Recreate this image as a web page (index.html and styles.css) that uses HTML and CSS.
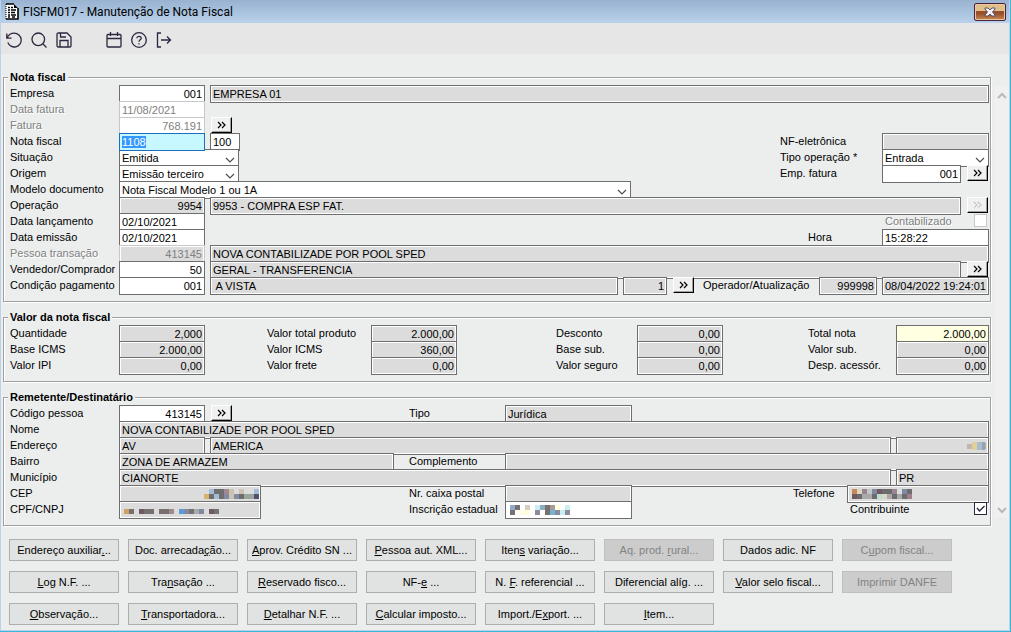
FILE: index.html
```html
<!DOCTYPE html>
<html lang="pt-BR">
<head>
<meta charset="UTF-8">
<meta name="viewport" content="width=device-width, initial-scale=1">
<title>FISFM017 - Manutenção de Nota Fiscal</title>
<link rel="stylesheet" href="styles.css">
</head>
<body>
<div class="window">
  <header class="titlebar">
    <svg class="app-icon" width="14" height="17" viewBox="0 0 14 17" aria-hidden="true">
      <path d="M1 1h8l4 4v11H1z" fill="#fff"/>
      <path d="M1 1h8M13 5v11H1" fill="none" stroke="#000" stroke-width="1.6"/>
      <path d="M1 1v15" fill="none" stroke="#000" stroke-dasharray="1 1"/>
      <path d="M9 1v4h4z" fill="#000"/>
      <path d="M3 4.500h2M6 4.500h2M3 7h2M6 7h5M3 9.500h2M6 9.500h4M3 12h2M6 12h5M3 14h2M7 14h3" stroke="#000" stroke-width="1.4"/>
    </svg>
    <h1>FISFM017 - Manutenção de Nota Fiscal</h1>
    <button class="close" type="button" aria-label="Fechar">
      <svg width="12" height="10" viewBox="0 0 12 10"><path d="M1 1h3l2 2 2-2h3v1L8.500 5 11 8v1H8L6 7 4 9H1V8l2.500-3L1 2z" fill="#f4f4f8" stroke="#55506a" stroke-width="1"/></svg>
    </button>
  </header>

  <nav class="toolbar" aria-label="Ferramentas">
    <button type="button" aria-label="Desfazer"><svg viewBox="0 0 16 16"><path d="M.8 1.500v4.700h4.700M1 6C2.500 2.800 5 1.200 8.300 1.200a6.900 6.900 0 1 1-6.500 9.200"/></svg></button>
    <button type="button" aria-label="Pesquisar"><svg viewBox="0 0 16 16"><circle cx="7.300" cy="7.300" r="6.300"/><path d="M12 12l3.500 3.500"/></svg></button>
    <button type="button" aria-label="Salvar"><svg viewBox="0 0 16 16"><path d="M1 2.200C1 1.500 1.500 1 2.200 1H11l4 4v8.800c0 .7-.5 1.200-1.200 1.200H2.200C1.500 15 1 14.500 1 13.800zM4 15V8.500h8V15M4.500 1v4H10"/></svg></button>
    <button class="apart" type="button" aria-label="Calendário"><svg viewBox="0 0 16 16"><path d="M1 3.500C1 2.900 1.500 2.500 2 2.500h12c.6 0 1 .4 1 1V14c0 .6-.4 1-1 1H2c-.5 0-1-.4-1-1zM1 6.500h14M4.500 0v4M11.500 0v4"/></svg></button>
    <button type="button" aria-label="Ajuda"><svg viewBox="0 0 16 16"><circle cx="8" cy="8" r="7.300"/><path d="M5.800 6.200C6 3.600 10.300 3.700 10.200 6.300 10.100 7.800 8 8 8 9.700M8 11.200v1.300"/></svg></button>
    <button type="button" aria-label="Sair"><svg viewBox="0 0 16 16"><path d="M5 1H1.500v14H5M5 8h9.500M11 4.500L14.500 8 11 11.500"/></svg></button>
  </nav>

  <main class="content">
    <form class="form">
      <fieldset>
        <legend>Nota fiscal</legend>

        <div class="row">
          <label class="main-label" for="empresa">Empresa</label>
          <input class="code num" id="empresa" value="001">
          <input class="grow" value="EMPRESA 01" aria-label="Nome da empresa" readonly>
        </div>
        <div class="row">
          <label class="main-label off" for="data-fatura">Data fatura</label>
          <input class="code" id="data-fatura" value="11/08/2021" disabled>
        </div>
        <div class="row">
          <label class="main-label off" for="fatura">Fatura</label>
          <input class="code num" id="fatura" value="768.191" disabled>
          <button class="more" type="button" aria-label="Buscar fatura"><svg viewBox="0 0 10 8"><path d="M1 1l3 3-3 3M5 1l3 3-3 3"/></svg></button>
        </div>
        <div class="row">
          <label class="main-label" for="nota">Nota fiscal</label>
          <input class="code current" id="nota" value="1108">
          <input class="serie" value="100" aria-label="Série">
          <div class="right">
            <label class="side-label" for="nfe">NF-eletrônica</label>
            <input class="date" id="nfe" readonly>
          </div>
        </div>
        <div class="row">
          <label class="main-label" for="situacao">Situação</label>
          <span class="combo combo-sm">
            <select id="situacao"><option>Emitida</option></select>
            <svg viewBox="0 0 10 6"><path d="M1 1l4 4 4-4"/></svg>
          </span>
          <div class="right">
            <label class="side-label" for="tipo-operacao">Tipo operação *</label>
            <span class="combo date">
              <select id="tipo-operacao"><option>Entrada</option></select>
              <svg viewBox="0 0 10 6"><path d="M1 1l4 4 4-4"/></svg>
            </span>
          </div>
        </div>
        <div class="row">
          <label class="main-label" for="origem">Origem</label>
          <span class="combo combo-sm">
            <select id="origem"><option>Emissão terceiro</option></select>
            <svg viewBox="0 0 10 6"><path d="M1 1l4 4 4-4"/></svg>
          </span>
          <div class="right">
            <label class="side-label" for="emp-fatura">Emp. fatura</label>
            <input class="emp num" id="emp-fatura" value="001">
            <button class="more" type="button" aria-label="Buscar empresa"><svg viewBox="0 0 10 8"><path d="M1 1l3 3-3 3M5 1l3 3-3 3"/></svg></button>
          </div>
        </div>
        <div class="row">
          <label class="main-label" for="modelo">Modelo documento</label>
          <span class="combo combo-lg">
            <select id="modelo"><option>Nota Fiscal Modelo 1 ou 1A</option></select>
            <svg viewBox="0 0 10 6"><path d="M1 1l4 4 4-4"/></svg>
          </span>
        </div>
        <div class="row">
          <label class="main-label" for="operacao">Operação</label>
          <input class="code num" id="operacao" value="9954" readonly>
          <input class="grow" value="9953 - COMPRA ESP FAT." aria-label="Descrição da operação" readonly>
          <button class="more" type="button" aria-label="Buscar operação" disabled><svg viewBox="0 0 10 8"><path d="M1 1l3 3-3 3M5 1l3 3-3 3"/></svg></button>
        </div>
        <div class="row">
          <label class="main-label" for="lancamento">Data lançamento</label>
          <input class="code" id="lancamento" value="02/10/2021">
          <div class="right check-row">
            <label class="off" for="contabilizado">Contabilizado</label>
            <input type="checkbox" id="contabilizado" disabled>
          </div>
        </div>
        <div class="row">
          <label class="main-label" for="emissao">Data emissão</label>
          <input class="code" id="emissao" value="02/10/2021">
          <div class="right">
            <label class="hour-label" for="hora">Hora</label>
            <input class="date" id="hora" value="15:28:22">
          </div>
        </div>
        <div class="row">
          <label class="main-label off" for="pessoa">Pessoa transação</label>
          <input class="code num shaded" id="pessoa" value="413145" disabled>
          <input class="grow" value="NOVA CONTABILIZADE POR POOL SPED" aria-label="Nome da pessoa" readonly>
        </div>
        <div class="row">
          <label class="main-label" for="vendedor">Vendedor/Comprador</label>
          <input class="code num" id="vendedor" value="50">
          <input class="grow" value="GERAL - TRANSFERENCIA" aria-label="Nome do vendedor" readonly>
          <button class="more" type="button" aria-label="Buscar vendedor"><svg viewBox="0 0 10 8"><path d="M1 1l3 3-3 3M5 1l3 3-3 3"/></svg></button>
        </div>
        <div class="row">
          <label class="main-label" for="condicao">Condição pagamento</label>
          <input class="code num" id="condicao" value="001">
          <input class="grow" value=" A VISTA" aria-label="Descrição da condição" readonly>
          <input class="parcel num" value="1" aria-label="Parcelas" readonly>
          <button class="more" type="button" aria-label="Ver parcelas"><svg viewBox="0 0 10 8"><path d="M1 1l3 3-3 3M5 1l3 3-3 3"/></svg></button>
          <label class="oper-label" for="operador">Operador/Atualização</label>
          <input class="oper num" id="operador" value="999998" readonly>
          <input class="date" value="08/04/2022 19:24:01" aria-label="Atualização" readonly>
        </div>
      </fieldset>

      <fieldset>
        <legend>Valor da nota fiscal</legend>
        <div class="values">
          <div class="pair"><label class="main-label" for="qtd">Quantidade</label><input class="code num" id="qtd" value="2,000" readonly></div>
          <div class="pair"><label class="value-label" for="total-produto">Valor total produto</label><input class="code num" id="total-produto" value="2.000,00" readonly></div>
          <div class="pair"><label class="tax-label" for="desconto">Desconto</label><input class="code num" id="desconto" value="0,00" readonly></div>
          <div class="pair"><label class="total-label" for="total-nota">Total nota</label><input class="total num highlight" id="total-nota" value="2.000,00"></div>

          <div class="pair"><label class="main-label" for="base-icms">Base ICMS</label><input class="code num" id="base-icms" value="2.000,00" readonly></div>
          <div class="pair"><label class="value-label" for="valor-icms">Valor ICMS</label><input class="code num" id="valor-icms" value="360,00" readonly></div>
          <div class="pair"><label class="tax-label" for="base-sub">Base sub.</label><input class="code num" id="base-sub" value="0,00" readonly></div>
          <div class="pair"><label class="total-label" for="valor-sub">Valor sub.</label><input class="total num" id="valor-sub" value="0,00" readonly></div>

          <div class="pair"><label class="main-label" for="valor-ipi">Valor IPI</label><input class="code num" id="valor-ipi" value="0,00" readonly></div>
          <div class="pair"><label class="value-label" for="frete">Valor frete</label><input class="code num" id="frete" value="0,00" readonly></div>
          <div class="pair"><label class="tax-label" for="seguro">Valor seguro</label><input class="code num" id="seguro" value="0,00" readonly></div>
          <div class="pair"><label class="total-label" for="despesas">Desp. acessór.</label><input class="total num" id="despesas" value="0,00" readonly></div>
        </div>
      </fieldset>

      <fieldset>
        <legend>Remetente/Destinatário</legend>
        <div class="row">
          <div class="first">
            <label class="main-label" for="codigo">Código pessoa</label>
            <input class="code num" id="codigo" value="413145">
            <button class="more" type="button" aria-label="Buscar pessoa"><svg viewBox="0 0 10 8"><path d="M1 1l3 3-3 3M5 1l3 3-3 3"/></svg></button>
          </div>
          <label class="mid-label" for="tipo">Tipo</label>
          <input class="mid" id="tipo" value="Jurídica" readonly>
        </div>
        <div class="row">
          <label class="main-label" for="nome">Nome</label>
          <input class="grow" id="nome" value="NOVA CONTABILIZADE POR POOL SPED" readonly>
        </div>
        <div class="row">
          <label class="main-label" for="endereco">Endereço</label>
          <input class="code" id="endereco" value="AV" readonly>
          <input class="grow" value="AMERICA" aria-label="Logradouro" readonly>
          <span class="masked total">
            <input class="num" aria-label="Número" readonly>
            <svg class="mosaic end" width="20" height="10" viewBox="0 0 20 10">
              <path d="M0 3h5v5H0z" fill="#c0b8a8"/><path d="M5 1h5v8H5z" fill="#e2d09a"/><path d="M10 1h5v8h-5z" fill="#a9bdd0"/><path d="M15 1h3v8h-3z" fill="#8da6bc"/><path d="M18 2h1v6h-1z" fill="#c6a878"/>
            </svg>
          </span>
        </div>
        <div class="row">
          <div class="first">
            <label class="main-label" for="bairro">Bairro</label>
            <input class="bairro" id="bairro" value="ZONA DE ARMAZEM" readonly>
          </div>
          <label class="mid-label" for="complemento">Complemento</label>
          <input class="grow" id="complemento" readonly>
        </div>
        <div class="row">
          <label class="main-label" for="municipio">Município</label>
          <input class="grow" id="municipio" value="CIANORTE" readonly>
          <input class="total" value="PR" aria-label="UF" readonly>
        </div>
        <div class="row">
          <div class="first">
            <label class="main-label" for="cep">CEP</label>
            <span class="masked doc">
              <input id="cep" readonly>
              <svg class="mosaic end" width="55" height="10" viewBox="0 0 55 10">
                <path d="M5 0h5v5H5zM10 5h5v5h-5zM50 0h5v5h-5z" fill="#a3bcd8"/>
                <path d="M10 0h10v5H10zM5 5h5v5H5zM15 5h5v5h-5zM35 5h5v5h-5z" fill="#6e6e70"/>
                <path d="M0 5h5v5H0z" fill="#d9b36c"/><path d="M20 0h5v5h-5z" fill="#a08a90"/>
                <path d="M25 0h5v10h-5zM35 0h5v5h-5z" fill="#c9c3b0"/>
                <path d="M20 5h5v5h-5zM30 5h5v5h-5z" fill="#858aa4"/><path d="M40 5h10v5H40z" fill="#9aa5a0"/><path d="M50 5h5v5h-5z" fill="#55506a"/>
              </svg>
            </span>
          </div>
          <label class="mid-label" for="caixa">Nr. caixa postal</label>
          <input class="mid" id="caixa" readonly>
          <div class="right">
            <label class="phone-label" for="telefone">Telefone</label>
            <span class="masked doc">
              <input id="telefone" readonly>
              <svg class="mosaic" width="60" height="10" viewBox="0 0 60 10">
                <path d="M0 0h5v5H0z" fill="#c58a58"/><path d="M5 0h5v5H5zM30 5h5v5h-5z" fill="#dcd6bc"/>
                <path d="M10 0h5v5h-5zM40 0h5v5h-5z" fill="#988594"/><path d="M15 0h5v5h-5z" fill="#c0c6c2"/>
                <path d="M20 0h5v5h-5zM50 0h5v5h-5z" fill="#8088a2"/><path d="M25 0h5v5h-5zM0 5h5v5H0z" fill="#6e5a60"/>
                <path d="M30 0h10v5H30zM5 5h5v5H5zM20 5h5v5h-5zM40 5h5v5h-5zM50 5h5v5h-5zM55 0h5v5h-5z" fill="#6c6c6e"/>
                <path d="M10 5h10v5H10zM35 5h5v5h-5zM45 5h5v5h-5z" fill="#a9a9aa"/><path d="M25 5h5v5h-5z" fill="#b8dcd6"/><path d="M55 5h5v5h-5z" fill="#a08090"/>
              </svg>
            </span>
          </div>
        </div>
        <div class="row">
          <div class="first">
            <label class="main-label" for="cnpj">CPF/CNPJ</label>
            <span class="masked doc">
              <input id="cnpj" readonly>
              <svg class="mosaic" width="98" height="10" viewBox="0 0 98 10">
                <path d="M0 4h5v5H0z" fill="#d0a064"/><path d="M5 4h5v5H5zM20 4h10v5H20zM35 4h10v5H35zM65 4h5v5h-5zM90 4h5v5h-5z" fill="#76716f"/>
                <path d="M15 4h5v5h-5zM85 4h5v5h-5z" fill="#6e5a64"/><path d="M45 4h5v5h-5z" fill="#a08a90"/>
                <path d="M55 4h5v5h-5z" fill="#5a9cd8"/><path d="M60 4h5v5h-5zM75 4h5v5h-5z" fill="#8088a2"/><path d="M70 4h5v5h-5z" fill="#a9a9aa"/>
              </svg>
            </span>
          </div>
          <label class="mid-label" for="inscricao">Inscrição estadual</label>
          <span class="masked mid">
            <input id="inscricao">
            <svg class="mosaic" width="60" height="10" viewBox="0 0 60 10">
              <path d="M0 0h5v5H0zM30 0h5v5h-5z" fill="#8fabc6"/><path d="M5 0h5v5H5zM0 5h5v5H0zM35 0h5v5h-5zM35 5h5v5h-5zM50 5h5v5h-5z" fill="#77716f"/>
              <path d="M15 0h5v5h-5z" fill="#d4d0be"/><path d="M10 5h10v5H10zM45 0h5v5h-5z" fill="#ffffe0"/>
              <path d="M25 0h5v5h-5zM55 0h5v5h-5zM50 5h5v5h-5z" fill="#c8f0f0"/><path d="M25 5h5v5h-5zM45 5h5v5h-5zM55 5h5v5h-5z" fill="#8c8c9c"/>
              <path d="M40 0h5v5h-5z" fill="#a39c98"/><path d="M40 5h5v5h-5z" fill="#74b4d4"/>
            </svg>
          </span>
          <div class="right check-row contrib">
            <label for="contribuinte">Contribuinte</label>
            <span class="tick">
              <input type="checkbox" id="contribuinte" checked>
              <svg viewBox="0 0 13 13"><path d="M3 6l2.500 3L10.500 4"/></svg>
            </span>
          </div>
        </div>
      </fieldset>
    </form>

    <div class="scrollbar" aria-hidden="true">
      <svg viewBox="0 0 10 8"><path d="M1 6l4-4 4 4"/></svg>
      <svg viewBox="0 0 10 8"><path d="M1 2l4 4 4-4"/></svg>
    </div>
  </main>

  <footer class="actions">
    <button type="button">Endereço auxiliar<u>.</u>..</button>
    <button type="button">Doc. arrecada<u>ç</u>ão...</button>
    <button type="button"><u>A</u>prov. Crédito SN ...</button>
    <button type="button"><u>P</u>essoa aut. XML...</button>
    <button type="button">Iten<u>s</u> variação...</button>
    <button type="button" disabled>Aq. prod. <u>r</u>ural...</button>
    <button type="button">Dados adic. NF</button>
    <button type="button" disabled>C<u>u</u>pom fiscal...</button>
    <button type="button"><u>L</u>og N.F. ...</button>
    <button type="button">Tra<u>n</u>sação ...</button>
    <button type="button"><u>R</u>eservado fisco...</button>
    <button type="button">NF-<u>e</u> ...</button>
    <button type="button">N. <u>F</u>. referencial ...</button>
    <button type="button">Diferencial alí<u>g</u>. ...</button>
    <button type="button"><u>V</u>alor selo fiscal...</button>
    <button type="button" disabled>Imprimir DANFE</button>
    <button type="button"><u>O</u>bservação...</button>
    <button type="button"><u>T</u>ransportadora...</button>
    <button type="button"><u>D</u>etalhar N.F. ...</button>
    <button type="button"><u>C</u>alcular imposto...</button>
    <button type="button">Import./E<u>x</u>port. ...</button>
    <button type="button"><u>I</u>tem...</button>
  </footer>
</div>

<script>
  // start on the invoice number, ready to be overtyped
  const nota = document.getElementById('nota');
  nota.focus();
  nota.select();
</script>
</body>
</html>
```
FILE: styles.css
```css
:root {
  --bg: #eceeee;
  --field: #dcdcdc;
  --line: #6e6e6e;
  --group: #a0a0a0;
  --off: #808080;
  --ink: #2e2640;
}

* {
  box-sizing: border-box;
}

body {
  margin: 0;
  min-height: 100vh;
  display: flex;
  border: solid #3ab8dc;
  border-width: 0 1px 1px 0;
  font: 11px/16px "Liberation Sans", Arial, sans-serif;
  color: #000;
  background: var(--bg);
}

.window {
  flex: 1;
  min-width: 0;
  display: flex;
  flex-direction: column;
  border: solid #b9d1ea;
  border-width: 0 1px 1px;
}

/* Title bar */
.titlebar {
  display: flex;
  align-items: center;
  height: 23px;
  padding: 0 3px 0 4px;
  background: linear-gradient(#98b2d0, #b9d1ea);
}

.titlebar h1 {
  flex: 1;
  margin: 0 0 0 4px;
  font: 12px/20px Roboto, "Open Sans", sans-serif;
}

.close {
  display: flex;
  align-items: center;
  justify-content: center;
  width: 32px;
  height: 18px;
  padding: 0;
  border: 1px solid #4a2040;
  border-radius: 2px;
  background: linear-gradient(#e0c088 0 45%, #98502c 45% 60%, #c88850);
  box-shadow: inset 0 0 0 1px #e8c8a0;
}

/* Toolbar */
.toolbar {
  display: flex;
  align-items: center;
  gap: 9px;
  height: 31px;
  padding: 2px 5px 0;
  background: #e6e6e6;
}

.toolbar button {
  width: 16px;
  height: 16px;
  padding: 0;
  border: 0;
  background: none;
}

.toolbar .apart {
  margin-left: 25px;
}

.toolbar svg {
  display: block;
  width: 16px;
  height: 16px;
  overflow: visible;
  fill: none;
  stroke: var(--ink);
  stroke-width: 1.3;
}

/* Form */
.content {
  display: flex;
  gap: 4px;
  padding: 15px 0 0 2px;
}

.form {
  flex: 1;
  min-width: 0;
  display: flex;
  flex-direction: column;
  gap: 7px;
}

fieldset {
  min-width: 0;
  margin: 0;
  padding: 0 1px 8px 6px;
  border: 1px solid var(--group);
  box-shadow: 1px 1px 0 #fff, inset 1px 1px 0 #fff;
}

legend {
  margin-left: -2px;
  padding: 0 2px;
  font-weight: bold;
  line-height: 16px;
  background: var(--bg);
}

.row,
.pair,
.first,
.right {
  display: flex;
  align-items: flex-start;
  gap: 5px;
  height: 16px;
}

/* fields are taller than their row, so each row covers the edge of the one above */
.row {
  position: relative;
}

.right {
  margin-left: auto;
}

.first {
  flex: none;
  width: 399px;
  margin-right: -5px;
}

label {
  flex: none;
  white-space: nowrap;
}

.main-label { width: 109px; margin-right: -5px; }
.side-label { width: 102px; margin-right: -5px; }
.hour-label { width: 74px; margin-right: -5px; }
.value-label { width: 104px; margin-right: -5px; }
.tax-label { width: 81px; margin-right: -5px; }
.total-label { width: 88px; margin-right: -5px; }
.mid-label { width: 96px; margin-right: -5px; }
.phone-label { width: 54px; margin-right: -5px; }
.oper-label { width: 111px; margin-left: 3px; }

.off {
  color: var(--off);
  text-shadow: 1px 1px 0 #fff;
}

input,
select {
  flex: none;
  height: 18px;
  margin: 0;
  padding: 0 2px;
  border: 1px solid var(--line);
  border-radius: 0;
  outline: 0;
  font: inherit;
  color: #000;
  background: #fff;
}

input:read-only {
  background: var(--field);
  box-shadow: inset 0 0 0 1px #fff;
}

input:disabled {
  border-color: #c8c8c8;
  color: var(--off);
  background: #fff;
}

input.shaded {
  background: var(--field);
}

input.highlight {
  background: #ffffe1;
}

input.current {
  position: relative;
  z-index: 1;
  border-color: #1a6fc0;
  background: #c8f8ff;
}

input.current::selection {
  color: #fff;
  background: #3399ff;
}

.num { text-align: right; }
.code { width: 86px; }
.serie { width: 30px; }
.emp { width: 79px; }
.parcel { width: 44px; }
.oper { width: 58px; }
.date { width: 107px; }
.total { width: 93px; }
.mid { width: 127px; }
.doc { width: 142px; }
.bairro { width: 275px; }

.grow {
  flex: 1;
  min-width: 0;
}

.combo {
  position: relative;
  flex: none;
}

.combo-sm { width: 120px; }
.combo-lg { flex: 0 1 512px; }

.combo select {
  display: block;
  width: 100%;
  padding: 0 2px 2px;
  appearance: none;
}

.combo svg {
  position: absolute;
  right: 4px;
  top: 8px;
  width: 10px;
  height: 6px;
  fill: none;
  stroke: #505050;
  stroke-width: 1.2;
  pointer-events: none;
}

.more {
  flex: none;
  display: flex;
  align-items: center;
  justify-content: center;
  width: 21px;
  height: 16px;
  margin: 0 1px;
  padding: 0;
  border: 1px solid #fff;
  border-right-color: #000;
  border-bottom-color: #000;
  background: #f0f0f0;
  box-shadow: inset -1px -1px 0 #a0a0a0;
}

.more svg {
  width: 10px;
  height: 8px;
  fill: none;
  stroke: #000;
  stroke-width: 1.2;
}

.more:disabled svg {
  stroke: #a8a8a8;
  stroke-dasharray: 1 1;
}

/* Tick boxes */
.check-row {
  width: 104px;
  justify-content: space-between;
  padding-right: 2px;
}

.contrib {
  width: 139px;
}

input[type="checkbox"] {
  display: block;
  width: 13px;
  height: 13px;
  margin-top: 1px;
  padding: 0;
  appearance: none;
  background: #fff;
  box-shadow: none;
}

.tick {
  position: relative;
}

.tick input {
  border-color: var(--ink);
}

.tick svg {
  position: absolute;
  left: 0;
  top: 1px;
  width: 13px;
  height: 13px;
  fill: none;
  stroke: var(--ink);
  stroke-width: 1.4;
  pointer-events: none;
}

/* Redacted values */
.masked {
  position: relative;
  flex: none;
}

.masked input {
  display: block;
  width: 100%;
}

.mosaic {
  position: absolute;
  left: 5px;
  top: 4px;
  shape-rendering: crispEdges;
}

.mosaic.end {
  left: auto;
  right: 2px;
}

.values {
  display: grid;
  grid-template-columns: 257fr 289fr 252fr 181fr;
}

.scrollbar {
  display: flex;
  flex-direction: column;
  justify-content: space-between;
  align-items: center;
  width: 14px;
  margin: 17px 0 8px;
  padding: 6px 0 4px;
  background: #f0f0f0;
}

.scrollbar svg {
  width: 10px;
  height: 8px;
  fill: none;
  stroke: #b8b8b8;
  stroke-width: 2;
}

/* Action buttons */
.actions {
  display: grid;
  grid-template-columns: repeat(auto-fill, 110px);
  gap: 10px 9px;
  padding: 13px 50px 5px 8px;
}

.actions button {
  height: 22px;
  padding: 0;
  border: 1px solid #adadad;
  font: inherit;
  color: #000;
  white-space: nowrap;
  background: #e1e3e2;
}

.actions button:disabled {
  border-color: #bfbfbf;
  color: #838383;
  background: #cccccc;
}
```
